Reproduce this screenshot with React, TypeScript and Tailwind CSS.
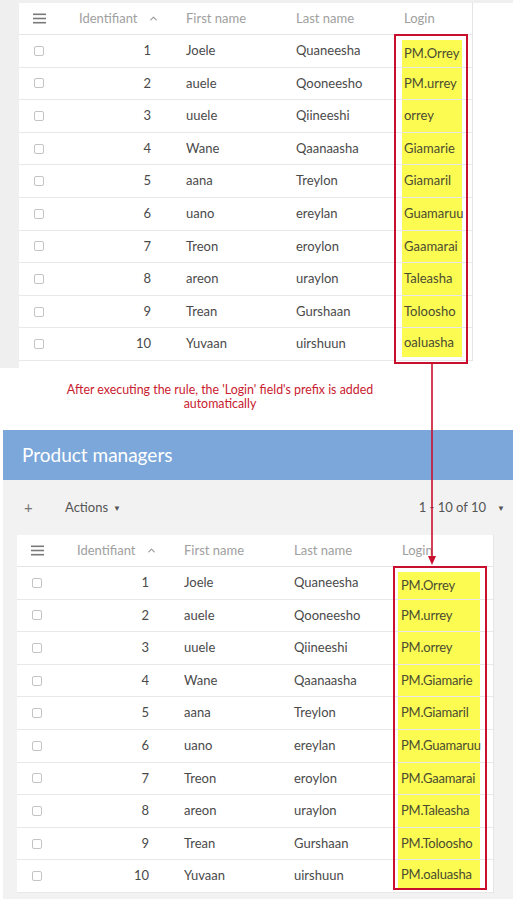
import React from 'react';
import { ChevronUp } from 'lucide-react';

interface Row {
  id: number;
  first: string;
  last: string;
  login: string;
}

const people = [
  ['Joele', 'Quaneesha', 'Orrey'],
  ['auele', 'Qooneesho', 'urrey'],
  ['uuele', 'Qiineeshi', 'orrey'],
  ['Wane', 'Qaanaasha', 'Giamarie'],
  ['aana', 'Treylon', 'Giamaril'],
  ['uano', 'ereylan', 'Guamaruu'],
  ['Treon', 'eroylon', 'Gaamarai'],
  ['areon', 'uraylon', 'Taleasha'],
  ['Trean', 'Gurshaan', 'Toloosho'],
  ['Yuvaan', 'uirshuun', 'oaluasha'],
];

// before the rule ran, only the first two had the prefix
const beforeRows: Row[] = people.map((p, i) => ({
  id: i + 1,
  first: p[0],
  last: p[1],
  login: i < 2 ? 'PM.' + p[2] : p[2],
}));

const afterRows: Row[] = people.map((p, i) => ({
  id: i + 1,
  first: p[0],
  last: p[1],
  login: 'PM.' + p[2],
}));

const Burger = () => (
  <svg width="13" height="11" viewBox="0 0 13 11">
    <rect x="0" y="0.5" width="13" height="1.6" fill="#7a7a7a" />
    <rect x="0" y="4.7" width="13" height="1.6" fill="#7a7a7a" />
    <rect x="0" y="8.9" width="13" height="1.6" fill="#7a7a7a" />
  </svg>
);

const Checkbox = () => (
  <div className="w-[10px] h-[10px] rounded-[2px] border border-[#c4c4c4] bg-white" />
);

const PeopleTable = ({ rows, compact }: { rows: Row[]; compact: boolean }) => {
  return (
    <div className="bg-white">
      <div className="grid grid-cols-[43px_107px_110px_108px_1fr] h-[32px] items-center border-b border-[#e4e4e4] text-[13px] text-[#a0a0a0]">
        <div className="pl-[14px] flex items-center">
          <Burger />
        </div>
        <div className="pl-[17px] flex items-center">
          <span>Identifiant</span>
          <ChevronUp className="ml-[10px] w-[11px] h-[11px] text-[#9a9a9a]" strokeWidth={2.5} />
        </div>
        <div className="pl-[17px]">First name</div>
        <div className="pl-[17px]">Last name</div>
        <div className="pl-[17px]">Login</div>
      </div>
      {rows.map((r, i) => (
        <div
          key={r.id}
          className="grid grid-cols-[43px_107px_110px_108px_1fr] h-[32.6px] items-center border-b border-[#e8e8e8] text-[13px] text-[#4a4a4a]"
        >
          <div className="pl-[15px]">
            <Checkbox />
          </div>
          <div className="text-right pr-[18px]">{r.id}</div>
          <div className="pl-[17px]">{r.first}</div>
          <div className="pl-[17px]">{r.last}</div>
          <div className={'h-full ' + (i === 0 ? 'pt-[5px] ' : '') + (i === rows.length - 1 ? 'pb-[3px]' : '')}>
            <div
              className={
                'h-full bg-[#fbfb52] flex items-center text-[#4b4b30] whitespace-nowrap ' +
                (compact ? 'ml-[15px] w-[60px] pl-[2px]' : 'ml-[13px] w-[82px] pl-[3px] tracking-[-0.2px]')
              }
            >
              {r.login}
            </div>
          </div>
        </div>
      ))}
    </div>
  );
};

const App = () => {
  return (
    <div className="relative w-[521px] h-[899px] bg-white overflow-hidden font-['Lato','Noto_Sans',sans-serif]">
      <div className="h-[3px] w-[513px] bg-[#efefef]" />
      <div className="flex">
        <div className="w-[19px] h-[365px] bg-[#efefef]" />
        <div className="w-[454px] self-start border-r border-[#e4e4e4]">
          <PeopleTable rows={beforeRows} compact={true} />
        </div>
      </div>

      <div className="w-[440px] h-[62px] pt-[15px] text-center text-[12.4px] leading-[14px] text-[#c9202f]">
        After executing the rule, the 'Login' field's prefix is added
        <br />
        automatically
      </div>

      <div className="ml-[3px] w-[510px]">
        <div className="h-[50px] bg-[#7ba7da] flex items-center pl-[19px] text-[19px] text-white">
          Product managers
        </div>
        <div className="bg-[#f2f2f2] h-[419px]">
          <div className="h-[55px] flex items-center justify-between pl-[21px] pr-[8px] text-[13px] text-[#555]">
            <div className="flex items-center">
              <span className="text-[15px] text-[#777] w-[41px]">+</span>
              <span>Actions</span>
              <span className="ml-[5px] text-[8px] text-[#555]">▼</span>
            </div>
            <div className="flex items-center">
              <span>1 - 10 of 10</span>
              <span className="ml-[11px] text-[8px] text-[#555]">▼</span>
            </div>
          </div>
          <div className="ml-[14px] w-[477px] border-r border-[#e6e6e6]">
            <PeopleTable rows={afterRows} compact={false} />
          </div>
        </div>
      </div>

      {/* annotation overlay */}
      <div className="absolute left-[394px] top-[34px] w-[74px] h-[330px] border-2 border-[#c8102e]" />
      <div className="absolute left-[393px] top-[566px] w-[94px] h-[324px] border-2 border-[#c8102e]" />
      <svg className="absolute left-[426px] top-[363px]" width="12" height="204" viewBox="0 0 12 204">
        <line x1="6" y1="0" x2="6" y2="194" stroke="#c8102e" strokeWidth="1.6" />
        <polygon points="2,193 10,193 6,202" fill="#c8102e" />
      </svg>
    </div>
  );
};

export default App;
